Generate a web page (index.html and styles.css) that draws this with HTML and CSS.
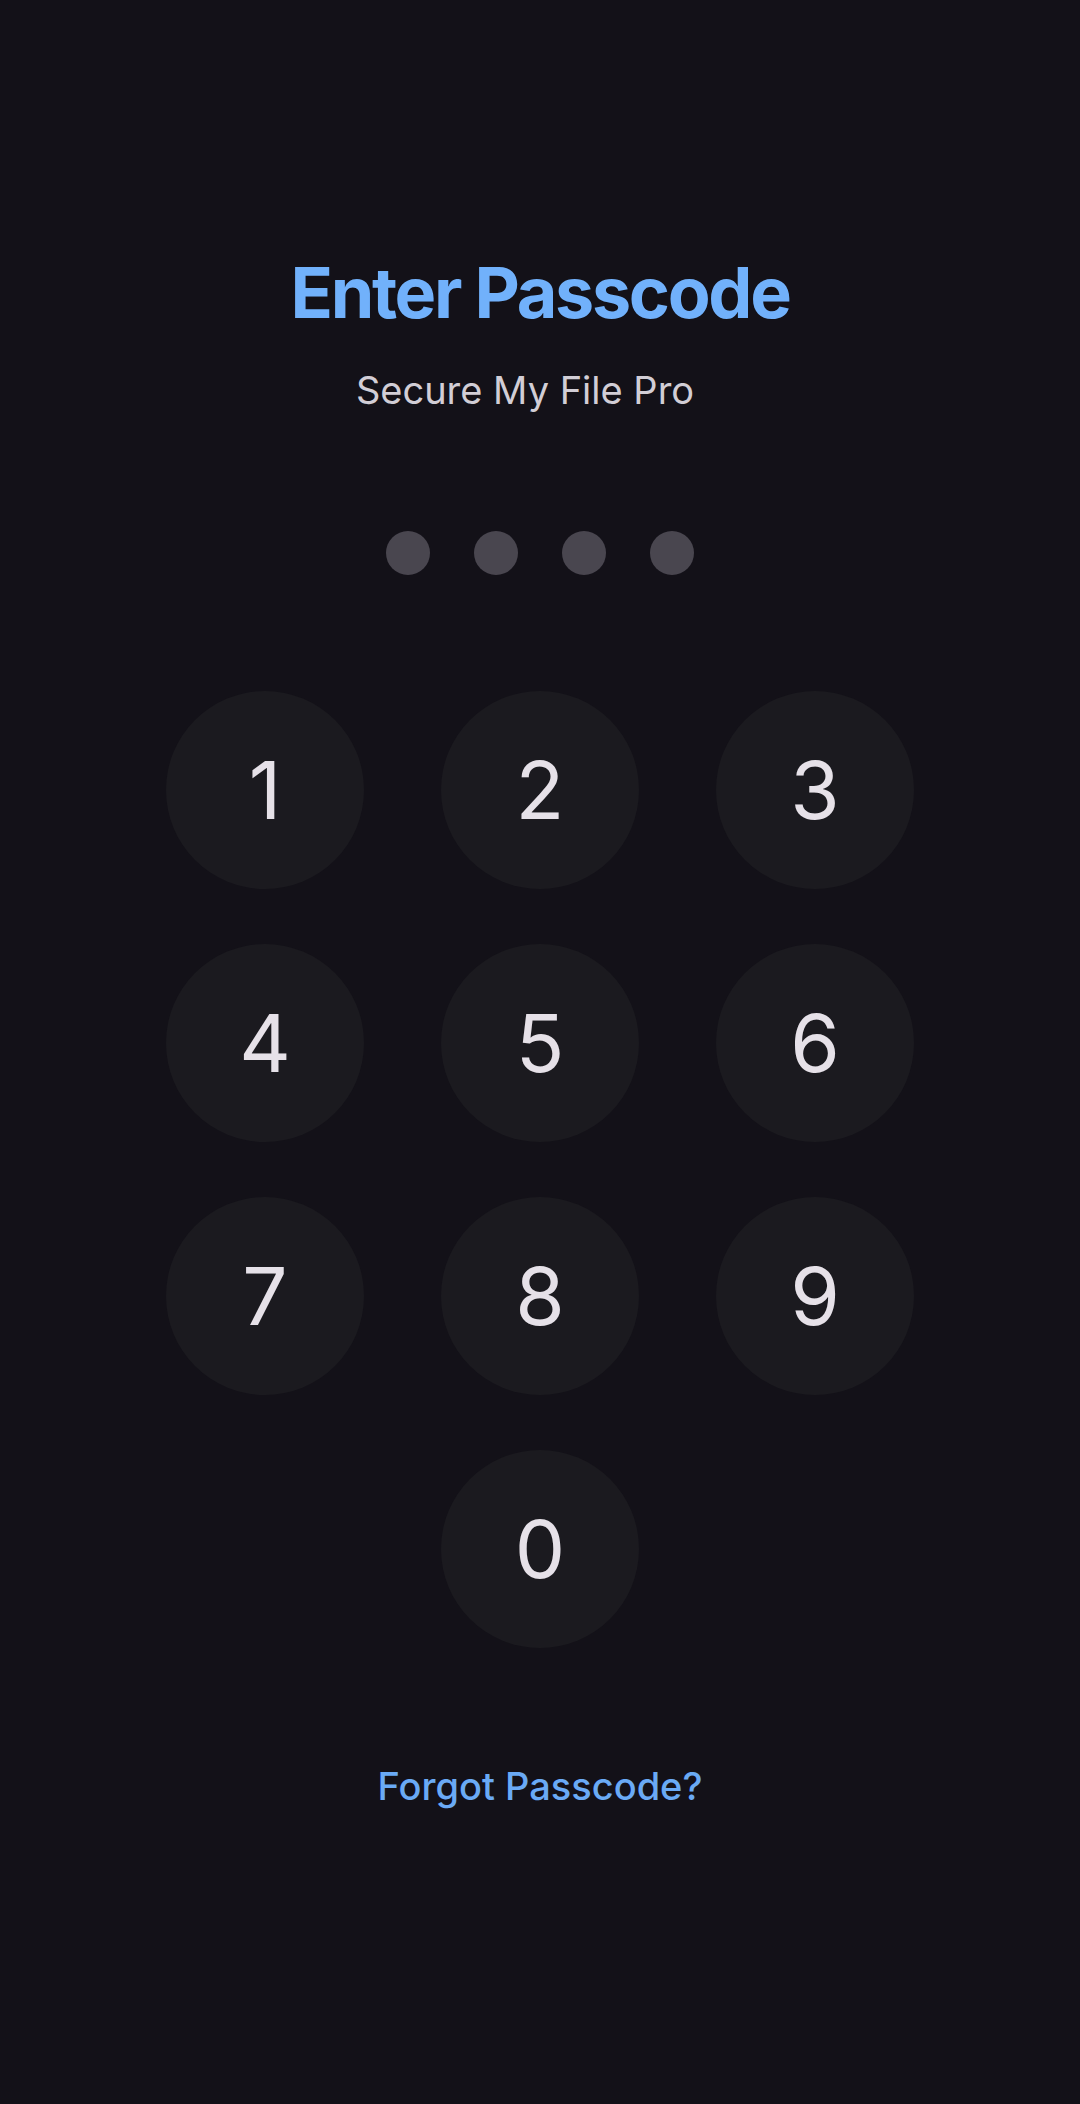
FILE: index.html
```html
<!DOCTYPE html>
<html lang="en">
<head>
<meta charset="utf-8">
<title>Enter Passcode</title>
<link rel="stylesheet" href="styles.css">
</head>
<body>
<main class="screen">
  <h1 class="title">Enter Passcode</h1>
  <p class="subtitle">Secure My File Pro</p>
  <div class="dots">
    <span class="dot"></span><span class="dot"></span><span class="dot"></span><span class="dot"></span>
  </div>
  <div class="keypad">
    <button class="key">1</button>
    <button class="key">2</button>
    <button class="key">3</button>
    <button class="key">4</button>
    <button class="key">5</button>
    <button class="key">6</button>
    <button class="key">7</button>
    <button class="key">8</button>
    <button class="key">9</button>
    <button class="key key-zero">0</button>
  </div>
  <a class="forgot" href="#">Forgot Passcode?</a>
</main>
</body>
</html>
```
FILE: styles.css
```css
html, body {
  margin: 0;
  padding: 0;
  background: #131118;
}
body {
  width: 1080px;
  height: 2104px;
  font-family: Inter, "Noto Sans", sans-serif;
}
.screen {
  display: flex;
  flex-direction: column;
  align-items: center;
  padding-top: 258px;
}
.title {
  margin: 0;
  font-size: 70px;
  line-height: 1;
  font-weight: 700;
  color: #71b1fb;
  letter-spacing: -2.3px;
}
.subtitle {
  margin: 43px 0 0;
  padding-right: 30px;
  font-size: 38px;
  line-height: 1;
  font-weight: 400;
  color: #d2ced6;
}
.dots {
  display: flex;
  gap: 44px;
  margin-top: 122px;
}
.dot {
  width: 44px;
  height: 44px;
  border-radius: 50%;
  background: #49464f;
}
.keypad {
  display: grid;
  grid-template-columns: repeat(3, 198px);
  grid-auto-rows: 198px;
  column-gap: 77px;
  row-gap: 55px;
  margin-top: 116px;
}
.key {
  width: 198px;
  height: 198px;
  border: 0;
  padding: 0;
  border-radius: 50%;
  background: #1b1a1f;
  color: #e6e1e8;
  font-family: Inter, "Noto Sans", sans-serif;
  font-size: 80px;
  font-weight: 400;
  line-height: 1;
  display: flex;
  align-items: center;
  justify-content: center;
}
.key-zero {
  grid-column: 2;
}
.forgot {
  margin-top: 119px;
  font-size: 38px;
  line-height: 1;
  font-weight: 500;
  color: #6aaaf5;
  text-decoration: none;
}
```
